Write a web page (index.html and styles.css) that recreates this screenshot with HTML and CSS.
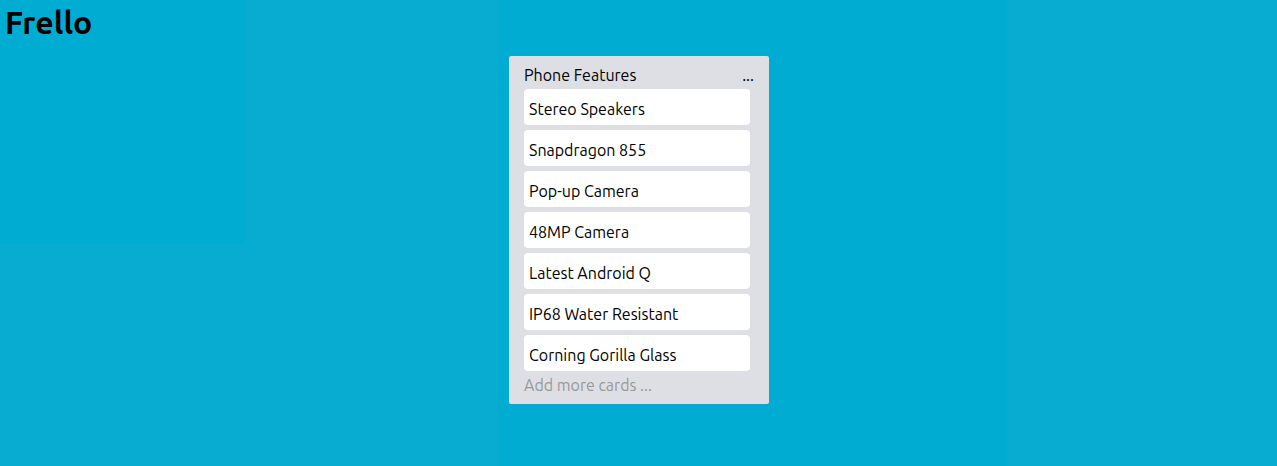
FILE: index.html
```html
<!DOCTYPE html>
<html lang="en">
<head>
<meta charset="utf-8">
<meta name="viewport" content="width=device-width, initial-scale=1">
<title>Frello</title>
<link rel="stylesheet" href="styles.css">
</head>
<body>
<h1 class="brand">Frello</h1>
<main class="board">
<section class="list">
<header class="list-header"><h2 class="list-title">Phone Features</h2><button class="list-menu" type="button" aria-label="List menu">...</button></header>
<ul class="cards">
<li class="card">Stereo Speakers</li>
<li class="card">Snapdragon 855</li>
<li class="card">Pop-up Camera</li>
<li class="card">48MP Camera</li>
<li class="card">Latest Android Q</li>
<li class="card">IP68 Water Resistant</li>
<li class="card">Corning Gorilla Glass</li>
</ul>
<button class="add-card" type="button">Add more cards ...</button>
</section>
</main>
</body>
</html>
```
FILE: styles.css
```css
* { box-sizing: border-box; }
body {
  margin: 0;
  min-height: 100vh;
  /* faint tonal blocks across the board */
  background:
    linear-gradient(#00acd1, #00acd1) 0 0 / 245px 244px no-repeat,
    linear-gradient(90deg, #09acd1 0 499px, #00acd1 499px 1007px, #09acd1 1007px);
  color: #000;
  font: 16px/18px Ubuntu, "Noto Sans", "Open Sans", sans-serif;
}
button { padding: 0; border: 0; background: none; color: inherit; font: inherit; cursor: pointer; }
.brand { margin: 0; padding: 4px 5px 16px; font-size: 32px; line-height: 36px; font-weight: 700; }
.board { display: flex; justify-content: center; padding-left: 1px; }
.list { width: 260px; padding: 10px 15px; border-radius: 2px; background: #dedfe4; }
.list-header { display: flex; justify-content: space-between; margin-bottom: 5px; }
.list-title { margin: 0; font-size: 16px; font-weight: 400; }
.cards { display: grid; gap: 5px; margin: 0 4px 5px 0; padding: 0; list-style: none; }
.card { padding: 11px 5px 7px; border-radius: 4px; background: #fff; }
.add-card { display: block; color: #999; }
```
